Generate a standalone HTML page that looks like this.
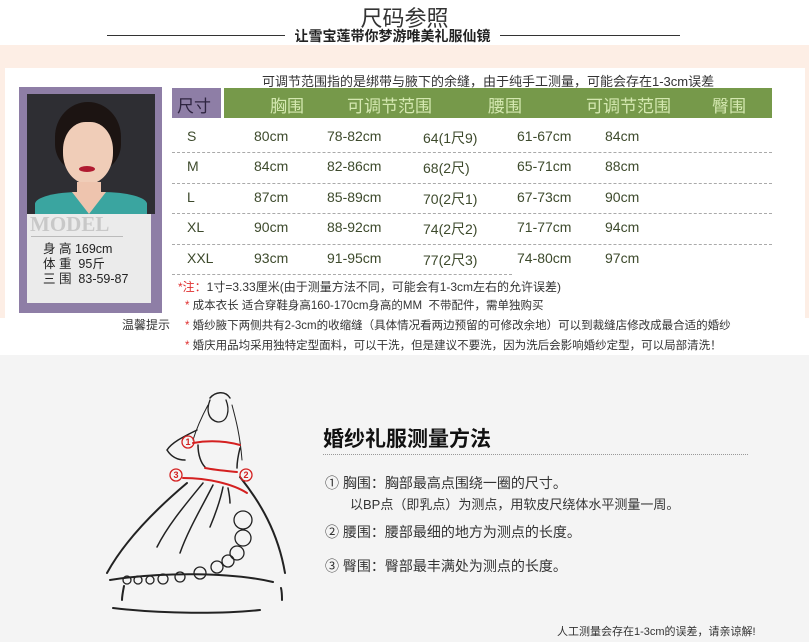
<!DOCTYPE html>
<html style="overflow:hidden"><head><meta charset="utf-8">
<style>
*{margin:0;padding:0;box-sizing:border-box}
html,body{width:809px;height:642px;overflow:hidden}
body{background:#fff;font-family:"Liberation Sans","Noto Sans CJK SC",sans-serif;position:relative}
.a{position:absolute;white-space:nowrap}
.peach{position:absolute;left:0;top:45px;width:809px;height:273px;background:#fdeee5}
.panel{position:absolute;left:5px;top:68px;width:800px;height:250px;background:#fff}
.row{position:absolute;left:172px;width:600px;height:20px;font-size:14px;color:#3d4a2c;font-family:"Liberation Sans Narrow","Liberation Sans","Noto Sans CJK SC",sans-serif}
.row span{position:absolute;top:0}
.dash{position:absolute;left:172px;width:600px;border-top:1px dashed #aaa}
.note{position:absolute;font-size:11.5px;color:#333;white-space:nowrap}
.note b{color:#e03030;font-weight:normal}
.hd span{position:absolute;top:4px;font-size:17px;color:#d4e8b0}
</style></head><body>
<div class="a" style="left:0;width:809px;text-align:center;top:1px;font-size:22px;color:#333">尺码参照</div>
<div class="a" style="left:107px;top:35px;width:178px;border-top:1px solid #333"></div>
<div class="a" style="left:500px;top:35px;width:180px;border-top:1px solid #333"></div>
<div class="a" style="left:285px;top:26px;width:215px;text-align:center;font-size:14px;color:#222;font-weight:bold">让雪宝莲带你梦游唯美礼服仙镜</div>
<div class="peach"></div>
<div class="panel"></div>
<div class="a" style="left:262px;top:71px;font-size:13px;color:#333">可调节范围指的是绑带与腋下的余缝，由于纯手工测量，可能会存在1-3cm误差</div>
<div class="a" style="left:19px;top:87px;width:143px;height:226px;background:#8e7ea6"></div>
<div class="a" style="left:27px;top:94px;width:128px;height:120px;background:#2e2e33;overflow:hidden">
 <div style="position:absolute;left:28px;top:8px;width:66px;height:70px;border-radius:50% 50% 40% 40%;background:#1c1412"></div>
 <div style="position:absolute;left:36px;top:28px;width:50px;height:62px;border-radius:45% 45% 50% 50%;background:#f0cdb8"></div>
 <div style="position:absolute;left:52px;top:72px;width:16px;height:6px;border-radius:50%;background:#b01a30"></div>
 <div style="position:absolute;left:50px;top:88px;width:24px;height:20px;background:#eec4ae"></div>
 <div style="position:absolute;left:8px;top:98px;width:112px;height:30px;border-radius:40% 40% 0 0;background:#3aa5a0"></div>
 <div style="position:absolute;left:45px;top:98px;width:34px;height:22px;background:#eec4ae;clip-path:polygon(0 0,100% 0,50% 100%)"></div>
</div>
<div class="a" style="left:27px;top:214px;width:124px;height:89px;background:#ebebeb"></div>
<div class="a" style="left:30px;top:212px;font-family:'Liberation Serif',serif;font-size:21px;font-weight:bold;color:#c8c8c8">MODEL</div>
<div class="a" style="left:31px;top:236px;width:92px;border-top:1px solid #bbb"></div>
<div class="a" style="left:43px;top:242px;font-size:12.5px;line-height:15px;color:#222">身 高 169cm<br>体 重&nbsp; 95斤<br>三 围&nbsp; 83-59-87</div>
<div class="a" style="left:172px;top:88px;width:49px;height:30px;background:#8e7ea6;color:#2e2440;font-size:17px;padding:4px 0 0 5px">尺寸</div>
<div class="a hd" style="left:224px;top:88px;width:548px;height:30px;background:#76994a">
<span style="left:46px">胸围</span><span style="left:123px">可调节范围</span><span style="left:264px">腰围</span><span style="left:362px">可调节范围</span><span style="left:488px">臀围</span></div>
<div class="row" style="top:128px"><span style="left:15px">S</span><span style="left:82px">80cm</span><span style="left:155px">78-82cm</span><span style="left:251px">64(1尺9)</span><span style="left:345px">61-67cm</span><span style="left:433px">84cm</span></div>
<div class="row" style="top:158px"><span style="left:15px">M</span><span style="left:82px">84cm</span><span style="left:155px">82-86cm</span><span style="left:251px">68(2尺)</span><span style="left:345px">65-71cm</span><span style="left:433px">88cm</span></div>
<div class="row" style="top:189px"><span style="left:15px">L</span><span style="left:82px">87cm</span><span style="left:155px">85-89cm</span><span style="left:251px">70(2尺1)</span><span style="left:345px">67-73cm</span><span style="left:433px">90cm</span></div>
<div class="row" style="top:219px"><span style="left:15px">XL</span><span style="left:82px">90cm</span><span style="left:155px">88-92cm</span><span style="left:251px">74(2尺2)</span><span style="left:345px">71-77cm</span><span style="left:433px">94cm</span></div>
<div class="row" style="top:250px"><span style="left:15px">XXL</span><span style="left:82px">93cm</span><span style="left:155px">91-95cm</span><span style="left:251px">77(2尺3)</span><span style="left:345px">74-80cm</span><span style="left:433px">97cm</span></div>
<div class="dash" style="top:152px"></div><div class="dash" style="top:183px"></div><div class="dash" style="top:213px"></div><div class="dash" style="top:244px"></div><div class="dash" style="top:274px;width:340px"></div>
<div class="note" style="left:178px;top:278px;font-size:12px"><b>*注：</b>1寸=3.33厘米(由于测量方法不同，可能会有1-3cm左右的允许误差)</div>
<div class="note" style="left:185px;top:297px"><b>*</b> 成本衣长 适合穿鞋身高160-170cm身高的MM&nbsp; 不带配件，需单独购买</div>
<div class="a" style="left:122px;top:316px;font-size:12px;color:#333">温馨提示</div>
<div class="note" style="left:185px;top:317px"><b>*</b> 婚纱腋下两侧共有2-3cm的收缩缝（具体情况看两边预留的可修改余地）可以到裁缝店修改成最合适的婚纱</div>
<div class="note" style="left:185px;top:337px"><b>*</b> 婚庆用品均采用独特定型面料，可以干洗，但是建议不要洗，因为洗后会影响婚纱定型，可以局部清洗！</div>
<div class="a" style="left:0;top:355px;width:809px;height:287px;background:#f4f4f4"></div>
<svg class="a" style="left:100px;top:360px" width="250" height="282" viewBox="0 0 250 282" fill="none" stroke="#222" stroke-width="2" stroke-linecap="round">
<path d="M110 40c-4 10-2 20 8 22 10 0 12-12 8-22" stroke-width="1.3"/>
<path d="M110 38c5-6 15-8 20 0" stroke-width="1.5"/>
<path d="M108 45c-8 15-12 25-15 35M132 45c4 15 8 30 10 55" stroke-width="1"/>
<path d="M97 70C85 76 72 82 67 90c5 8 12 10 18 10" stroke-width="1.5"/>
<path d="M98 85c0 10 3 18 7 22M140 88c-2 8-3 14-3 20" stroke-width="1.5"/>
<path d="M87 123C55 150 25 180 7 213M140 117c20 25 38 55 45 96"/>
<path d="M103 123C85 145 68 165 57 187M113 125c-10 20-25 45-33 68M123 127c-3 15-8 28-13 40M128 128c1 5 2 10 2 15" stroke-width="1.5"/>
<path d="M10 220c50-8 120-8 163 2"/>
<path d="M24 226c-1 5-2 10-2 14M181 228c1 4 1 8 1 12"/>
<path d="M13 248c50 6 110 6 147 2"/>
<g stroke-width="1.3"><circle cx="143" cy="160" r="9"/><circle cx="143" cy="178" r="8"/><circle cx="137" cy="193" r="7"/><circle cx="128" cy="201" r="6"/><circle cx="117" cy="207" r="6"/><circle cx="100" cy="213" r="6"/><circle cx="80" cy="217" r="5"/><circle cx="63" cy="219" r="5"/><circle cx="50" cy="220" r="4"/><circle cx="38" cy="220" r="4"/><circle cx="27" cy="220" r="4"/></g>
<g stroke="#d42020" stroke-width="2"><path d="M93 83c17-3 32-2 47 2M105 108c10 2 22 3 32 4M83 118c25 0 50 6 64 15"/><circle cx="88" cy="82" r="6" stroke-width="1.3"/><circle cx="76" cy="115" r="6" stroke-width="1.3"/><circle cx="146" cy="115" r="6" stroke-width="1.3"/></g>
<g fill="#d42020" stroke="none" font-size="9" font-weight="bold" font-family="Liberation Sans"><text x="85.5" y="85">1</text><text x="73.5" y="118">3</text><text x="143.5" y="118">2</text></g>
</svg>
<div class="a" style="left:323px;top:423px;font-size:21px;font-weight:bold;color:#111">婚纱礼服测量方法</div>
<div class="a" style="left:323px;top:454px;width:425px;border-top:1px dotted #999"></div>
<div class="a" style="left:325px;top:473px;font-size:14px;color:#333">① 胸围：胸部最高点围绕一圈的尺寸。</div>
<div class="a" style="left:350px;top:494px;font-size:13px;color:#333">以BP点（即乳点）为测点，用软皮尺绕体水平测量一周。</div>
<div class="a" style="left:325px;top:522px;font-size:14px;color:#333">② 腰围：腰部最细的地方为测点的长度。</div>
<div class="a" style="left:325px;top:556px;font-size:14px;color:#333">③ 臀围：臀部最丰满处为测点的长度。</div>
<div class="a" style="left:557px;top:623px;font-size:11px;color:#333">人工测量会存在1-3cm的误差，请亲谅解!</div>
</body></html>
